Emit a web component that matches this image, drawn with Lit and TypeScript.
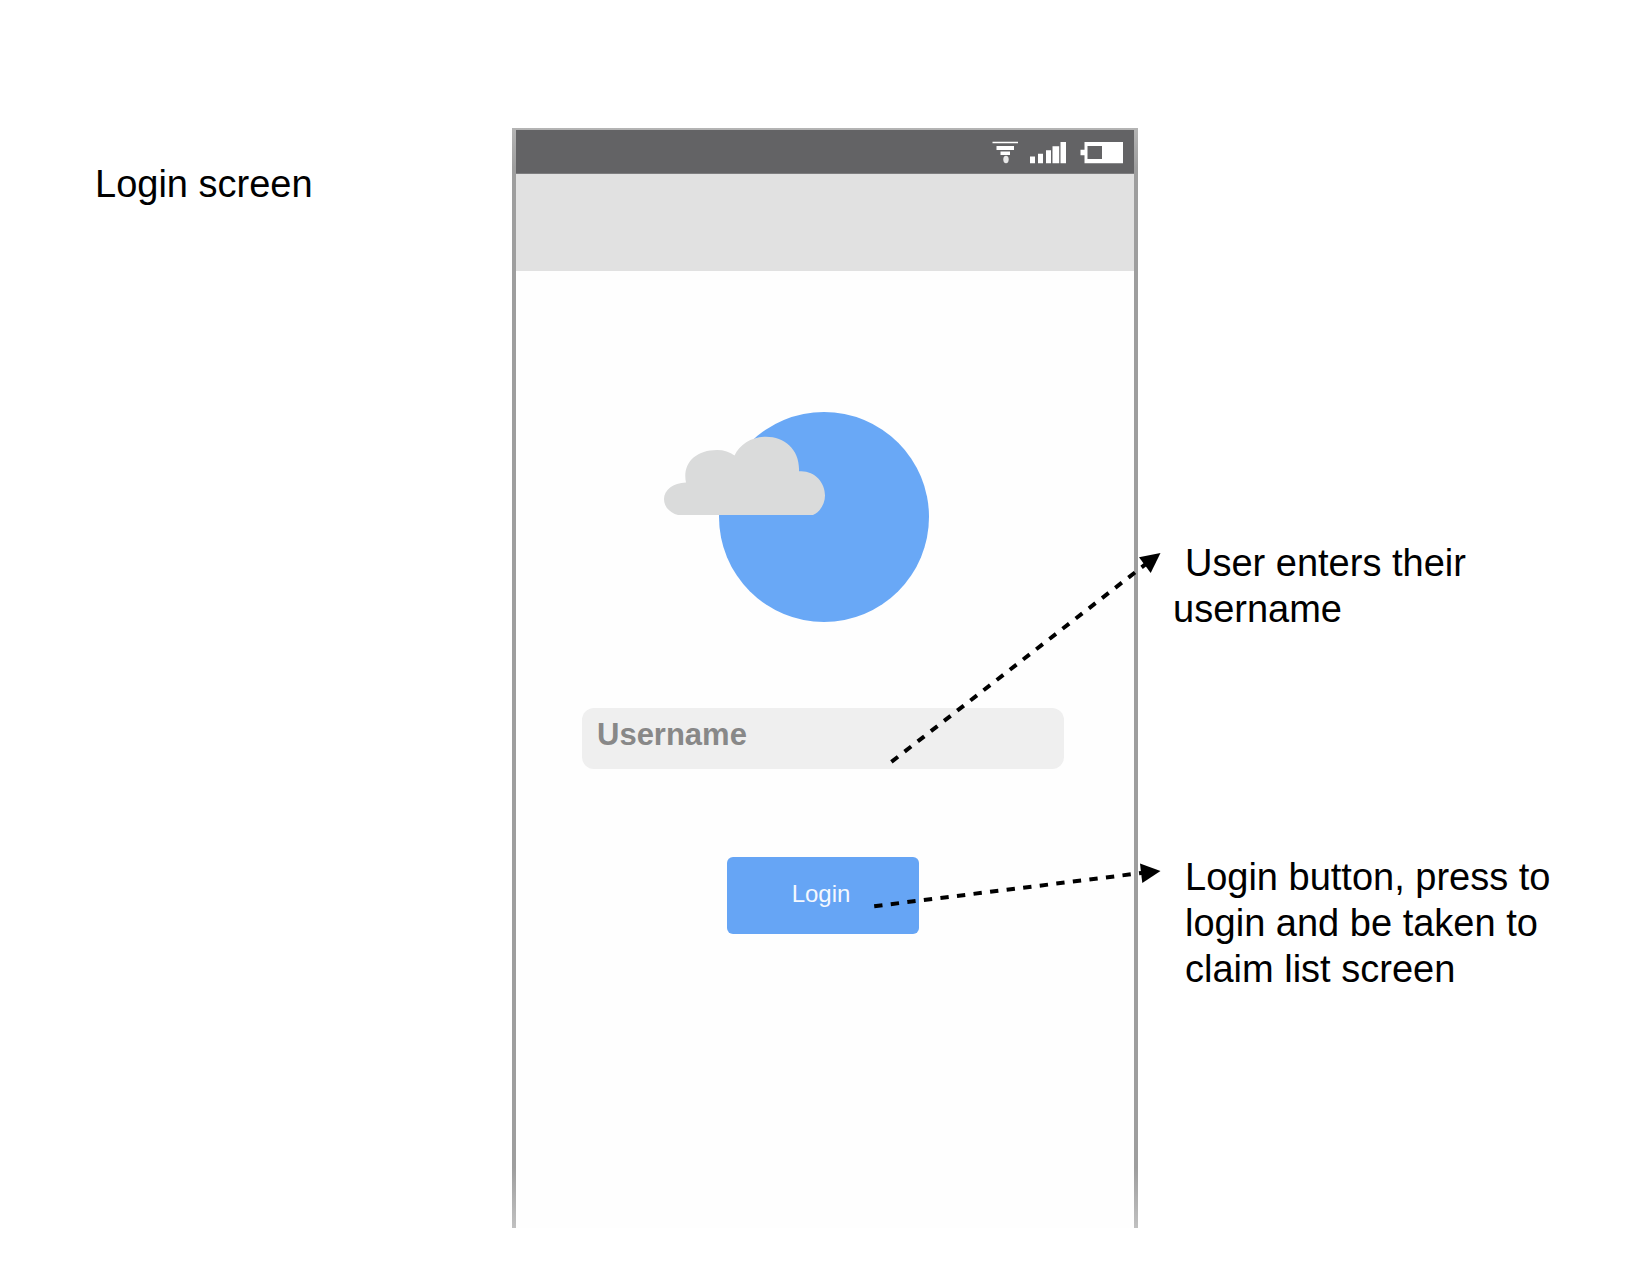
import { LitElement, html, css, svg } from "lit";
import { customElement } from "lit/decorators.js";

@customElement("status-bar")
class StatusBar extends LitElement {
  static styles = css`
    :host {
      display: flex;
      justify-content: flex-end;
      align-items: center;
      box-sizing: border-box;
      height: 44px;
      padding-right: 10px;
      background: #636365;
      border-bottom: 1px solid #7d7d7f;
    }
    .icons {
      display: block;
      width: 132px;
      height: 24px;
      fill: #fff;
    }
  `;

  render() {
    return html`
      <svg class="icons" viewBox="0 0 132 24" role="img" aria-label="Wi-Fi, signal and battery">
        ${svg`
          <path d="M.5 1.700h25.500v1.600H.5zM4.500 6h17.500v4H4.500zM8.500 11.500h9.500v3.500H8.500z" />
          <ellipse cx="14" cy="19.500" rx="2.700" ry="3.700" opacity=".85" />
          <path d="M38 16.500h5v6.800h-5zM46 13.800h5v9.500h-5zM54 10.300h5v13h-5zM60.500 6.300h6.700v17h-6.700zM68.500 2h5.500v21.300h-5.500z" />
          <path fill-rule="evenodd" d="M92.500 2h38.500v21.300h-38.500v-8h-4v-5.500h4zM95.500 6v13h14.500v-13z" />
        `}
      </svg>
    `;
  }
}

@customElement("app-root")
class AppRoot extends LitElement {
  static styles = css`
    :host {
      display: block;
      font-family: "Liberation Sans", Arial, Helvetica, sans-serif;
      color: #000;
    }
    .page {
      display: grid;
      grid-template-columns: 1fr 626px 1fr;
      box-sizing: border-box;
      min-height: 100vh;
      padding: 128px 0 47px;
      background: #fff;
    }
    .title,
    .note {
      margin: 0;
      font-size: 38px;
      font-weight: 400;
      line-height: 46px;
    }
    .title {
      padding: 33px 0 0 95px;
    }
    .phone {
      position: relative;
      display: flex;
      flex-direction: column;
      box-sizing: border-box;
      padding: 2px 4px 0;
      background: linear-gradient(#b4b4b4, #9e9e9e 40px, #9e9e9e calc(100% - 60px), #c0c0c0);
    }
    .app-bar {
      height: 97px;
      background: #e1e1e1;
    }
    .screen {
      flex: 1;
      display: flex;
      flex-direction: column;
      align-items: center;
      padding: 141px 4px 0 0;
      background: #fefefe;
    }
    .logo {
      display: block;
      width: 318px;
      height: 210px;
    }
    .form {
      display: flex;
      flex-direction: column;
      align-items: center;
      gap: 88px;
      padding-top: 86px;
    }
    .field {
      box-sizing: border-box;
      width: 482px;
      height: 61px;
      padding: 0 15px 8px;
      border: 0;
      border-radius: 12px;
      background: #efefef;
      color: #888;
      font: bold 31px "Liberation Sans", Arial, sans-serif;
    }
    .field::placeholder {
      color: #888;
      opacity: 1;
    }
    .login {
      width: 192px;
      height: 77px;
      padding: 0 4px 4px 0;
      border: 0;
      border-radius: 6px;
      background: #66a5f5;
      color: #f4f8fe;
      font: 24px "Liberation Sans", Arial, sans-serif;
    }
    .arrows {
      position: absolute;
      top: 0;
      left: 0;
      width: 660px;
      height: 800px;
      pointer-events: none;
    }
    .dash {
      fill: none;
      stroke: #000;
      stroke-width: 4;
    }
    .notes {
      display: flex;
      flex-direction: column;
      gap: 222px;
      padding: 412px 90px 0 35px;
    }
    .hanging {
      text-indent: 12px;
    }
    .indented {
      padding-left: 12px;
    }
  `;

  render() {
    return html`
      <main class="page">
        <h1 class="title">Login screen</h1>
        <section class="phone" aria-label="Phone">
          <status-bar></status-bar>
          <div class="app-bar"></div>
          <div class="screen">
            <svg class="logo" viewBox="0 0 318 210" aria-hidden="true">
              <circle cx="160" cy="105" r="105" fill="#69a8f6" />
              <path
                fill="#dadbdb"
                d="M14 103C6 101 0 95 0 87C0 78 9 71 22 70.500C18 52 31 38 53 38C60 38 66 40 70.500 43.500C76 32 88 24.700 102 24.700C121 24.700 136 38 135 59.300C150 58 161 70 161 83.500C161 92 156 100 149 103Z"
              />
            </svg>
            <form class="form" @submit=${(e: Event) => e.preventDefault()}>
              <input class="field" type="text" name="username" placeholder="Username" aria-label="Username" />
              <button class="login" type="submit">Login</button>
            </form>
          </div>
          <svg class="arrows" viewBox="512 128 660 800" aria-hidden="true">
            <path class="dash" stroke-dasharray="8.340 8.340" d="M891.400 761.900L1146 563.900" />
            <path d="M1160.500 553L1139 557.300L1150.700 573Z" />
            <path class="dash" stroke-dasharray="8.340 8.340" d="M874.200 906.200L1144 872.700" />
            <path d="M1160.500 871L1140 863.500L1142.300 883Z" />
          </svg>
        </section>
        <aside class="notes">
          <p class="note hanging">User enters their username</p>
          <p class="note indented">Login button, press to login and be taken to claim list screen</p>
        </aside>
      </main>
    `;
  }
}
